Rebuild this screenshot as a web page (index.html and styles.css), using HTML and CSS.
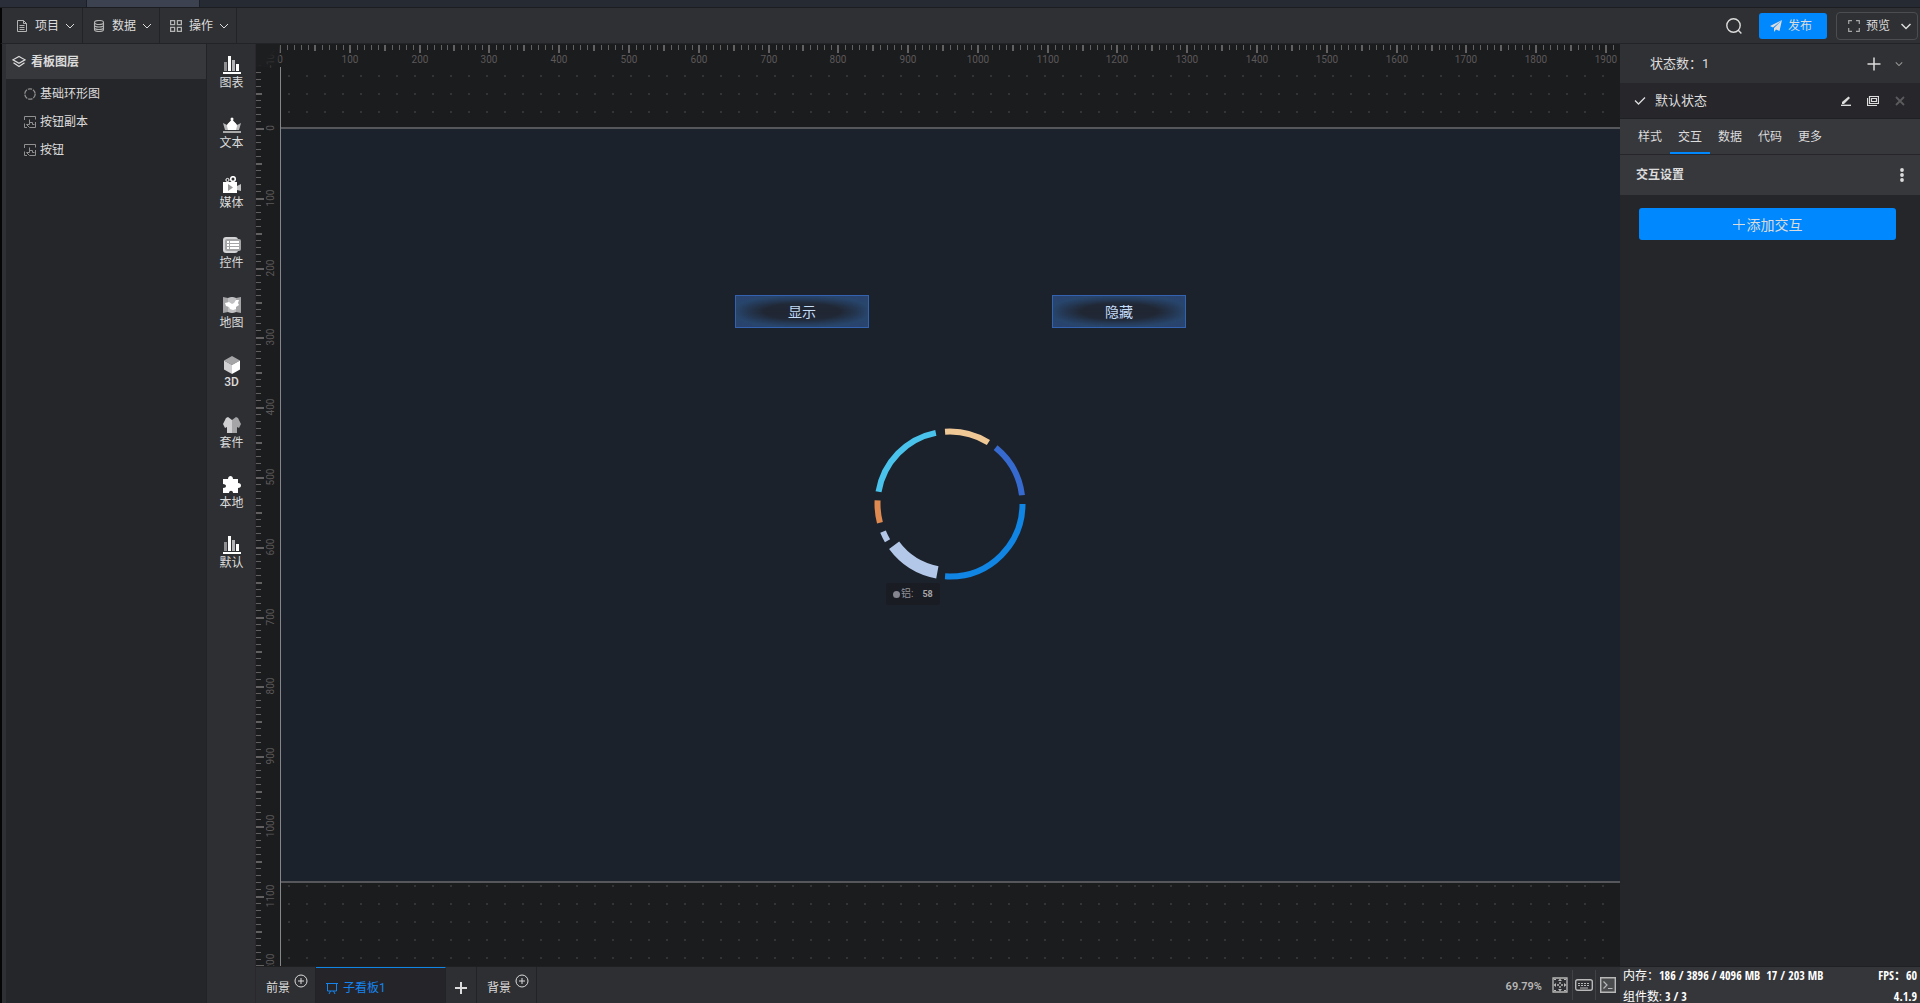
FILE: index.html
```html
<!DOCTYPE html>
<html lang="zh-CN">
<head>
<meta charset="utf-8">
<title>看板编辑器</title>
<link rel="stylesheet" href="styles.css">
</head>
<body>
<svg class="sprite" aria-hidden="true">
  <symbol id="chevron" viewBox="0 0 10 10"><path d="M1 3l4 4 4-4" fill="none" stroke="currentColor" stroke-width="1"/></symbol>
  <symbol id="bars" viewBox="0 0 18 18"><path d="M0 16h18v2H0z" fill="#fff"/><path d="M1 6h3v9H1z" fill="#8f8f91"/><path d="M5 0h3v15H5z" fill="#fff"/><path d="M9 4h3v11H9z" fill="#b4b4b6"/><path d="M13 8h3v7h-3z" fill="#fff"/></symbol>
  <symbol id="touch" viewBox="0 0 12 12"><path d="M.5 4V.500h11v3M.5 7.500v4h2.500M11.500 6v5.500H5.500L2.500 8.500h3V3.500M5.500 6.500h3v2h2" fill="none" stroke="currentColor"/></symbol>
  <symbol id="circle-plus" viewBox="0 0 14 14"><circle cx="7" cy="7" r="6" fill="none" stroke="currentColor"/><path d="M4 7h6M7 4v6" stroke="currentColor"/></symbol>
</svg>

<div class="window-tabs"><span class="window-tab"></span><span class="window-tab current"></span></div>

<header class="toolbar">
  <nav class="menus">
    <button class="menu"><svg class="icon12" viewBox="0 0 12 12"><path d="M1.500.500h6l3 3v8h-9zM7.500.500v3h3M3.500 5.500h5M3.500 7.500h5M3.500 9.500h5" fill="none" stroke="currentColor"/></svg><span>项目</span><svg class="chev"><use href="#chevron"/></svg></button>
    <button class="menu"><svg class="icon12" viewBox="0 0 12 12"><g fill="none" stroke="currentColor" stroke-width="1.100"><ellipse cx="6" cy="2.500" rx="4.500" ry="2"/><path d="M1.500 2.500v7c0 1.200 2 2 4.500 2s4.500-.8 4.500-2v-7M1.500 5c0 1.200 2 2 4.500 2s4.500-.8 4.500-2M1.500 7.500c0 1.200 2 2 4.500 2s4.500-.8 4.500-2"/></g></svg><span>数据</span><svg class="chev"><use href="#chevron"/></svg></button>
    <button class="menu"><svg class="icon12" viewBox="0 0 12 12"><path d="M.6.600h4v4h-4zM7.400.600h4v4h-4zM.6 7.400h4v4h-4zM7.400 7.400h4v4h-4z" fill="none" stroke="currentColor" stroke-width="1.300"/></svg><span>操作</span><svg class="chev"><use href="#chevron"/></svg></button>
  </nav>
  <div class="actions">
    <button class="search" aria-label="搜索"><svg viewBox="0 0 16 16"><circle cx="7.500" cy="7.500" r="6.700" fill="none" stroke="currentColor" stroke-width="1.400"/><path d="M12 12l3.400 3.400" stroke="currentColor" stroke-width="1.400"/></svg></button>
    <button class="publish"><svg class="icon12" viewBox="0 0 12 12"><path d="M12 0L0 6l3 1.500zM12 0L4 8v4l2-2.500L9.500 11z" fill="currentColor"/></svg><span>发布</span></button>
    <button class="preview"><svg class="icon12" viewBox="0 0 12 12"><path d="M.7 4V.700H4M8 .700h3.300V4M11.300 8v3.300H8M4 11.300H.700V8" fill="none" stroke="#a8a8a8" stroke-width="1.200"/></svg><span>预览</span><svg class="chev" viewBox="0 0 10 10"><path d="M.500 3L5 7.500 9.500 3" fill="none" stroke="currentColor" stroke-width="1.500"/></svg></button>
  </div>
</header>

<main class="workspace">
  <aside class="layers">
    <h2 class="layers-title"><svg viewBox="0 0 14 14"><path d="M7 1.500l6 3.300-6 3.400-6-3.400zM1.500 7.700L7 11.500l5.500-3.800" fill="none" stroke="currentColor" stroke-width="1.200"/></svg>看板图层</h2>
    <ul class="layer-list">
      <li><svg class="icon12" viewBox="0 0 12 12"><circle cx="6" cy="6" r="5.200" fill="none" stroke="currentColor" stroke-width="1.300" stroke-dasharray="4.400 1"/></svg>基础环形图</li>
      <li><svg class="icon12"><use href="#touch"/></svg>按钮副本</li>
      <li><svg class="icon12"><use href="#touch"/></svg>按钮</li>
    </ul>
  </aside>

  <nav class="tools">
    <button class="tool"><svg><use href="#bars"/></svg>图表</button>
    <button class="tool"><svg viewBox="0 0 18 18"><path d="M0 7l4 2 5-6 5 6 4-2-2 7H2z" fill="#b9b9bb"/><path d="M9 3c1 3 5 4 5 7l-1 4H5l-1-4c0-3 4-4 5-7z" fill="#fff"/><circle cx="9" cy="3" r="1.500" fill="#fff"/><path d="M0 15h18v2H0z" fill="#aaa"/></svg>文本</button>
    <button class="tool"><svg viewBox="0 0 18 18"><circle cx="4.500" cy="4" r="1.600" fill="none" stroke="#fff"/><circle cx="10" cy="3" r="2.300" fill="none" stroke="#fff" stroke-width="1.600"/><path d="M0 6h14v11H0z" fill="#fff"/><path d="M5 8l5 3.500L5 15z" fill="#999"/><path d="M14 10l4-2v7l-4-1z" fill="#c4c4c6"/></svg>媒体</button>
    <button class="tool"><svg viewBox="0 0 18 18"><rect x="0" y="1" width="15" height="16" rx="3" fill="#d4d4d6"/><rect x="2" y="3" width="16" height="12" rx="2" fill="#a5a5a8"/><path d="M4 5h2v2H4zM7 5h9v2H7zM4 8h2v2H4zM7 8h9v2H7zM4 11h2v2H4zM7 11h9v2H7z" fill="#fff"/></svg>控件</button>
    <button class="tool"><svg viewBox="0 0 18 18"><path d="M0 1l5 1 4-1 4 1 5-1v16l-5-1-4 1-4-1-5 1z" fill="#a5a5a8"/><path d="M5 2l4-1 4 1v14l-4 1-4-1z" fill="#c0c0c2"/><path d="M2 7l4-1 3 2 2-1 2-3h3l-1 3 1 2-3 2v2l-3 1-3-1-1-2-3-1z" fill="#fff"/></svg>地图</button>
    <button class="tool"><svg viewBox="0 0 18 18"><path d="M9 0l8 4.500L9 9 1 4.500z" fill="#a5a5a8"/><path d="M1 4.500L9 9v9l-8-4.500z" fill="#d0d0d2"/><path d="M17 4.500L9 9v9l8-4.500z" fill="#fff"/></svg><span>3D</span></button>
    <button class="tool"><svg viewBox="0 0 18 18"><path d="M5 1l4 3v13H4v-6l-2 1-2-4 3-6z" fill="#d0d0d2"/><path d="M13 1L9 4v13h5v-6l2 1 2-4-3-6z" fill="#a5a5a8"/></svg>套件</button>
    <button class="tool"><svg viewBox="0 0 18 18"><path d="M0 3h5c0-4 5-4 5 0h5v4c4 0 4 5 0 5v5h-5c0-3-4-3-4 0H0v-5c4 0 4-4 0-4z" fill="#fff"/></svg>本地</button>
    <button class="tool"><svg><use href="#bars"/></svg>默认</button>
  </nav>

  <section class="stage">
    <div class="board">
      <svg class="ruler-top" id="ruler-top" aria-hidden="true"></svg>
      <svg class="ruler-left" id="ruler-left" aria-hidden="true"></svg>
      <div class="ruler-corner"></div>
      <div class="grid">
        <div class="canvas">
          <button class="node glow show">显示</button>
          <button class="node glow hide">隐藏</button>
          <svg class="node ring" viewBox="-80 -80 160 160" role="img" aria-label="基础环形图">
            <g fill="none" stroke-width="6" transform="rotate(-90)">
              <circle r="72.500" pathLength="360" stroke="#f0c896" stroke-dasharray="36 324" stroke-dashoffset="4"/>
              <circle r="72.500" pathLength="360" stroke="#366ace" stroke-dasharray="44 316" stroke-dashoffset="-39"/>
              <circle r="72.500" pathLength="360" stroke="#1085e3" stroke-dasharray="94 266" stroke-dashoffset="-90"/>
              <circle r="69.500" pathLength="360" stroke="#b3c8e9" stroke-width="12.500" stroke-dasharray="43 317" stroke-dashoffset="-190.500"/>
              <circle r="72.500" pathLength="360" stroke="#b3c8e9" stroke-dasharray="8 352" stroke-dashoffset="-239.500"/>
              <circle r="72.500" pathLength="360" stroke="#de8a50" stroke-dasharray="18 342" stroke-dashoffset="-255"/>
              <circle r="72.500" pathLength="360" stroke="#4ac3ec" stroke-dasharray="69 291" stroke-dashoffset="-279.700"/>
            </g>
          </svg>
          <div class="node tip"><i></i><span>铝:</span><b>58</b></div>
        </div>
      </div>
    </div>
    <footer class="pages">
      <button class="page">前景<svg class="plus-badge"><use href="#circle-plus"/></svg></button>
      <button class="page current"><svg class="icon12" viewBox="0 0 12 12"><path d="M0 1.500h12M1.500 2v7h9V2M4.500 9l-1.500 3M7.500 9L9 12" fill="none" stroke="currentColor"/></svg>子看板1</button>
      <button class="page add" aria-label="添加"><svg class="icon12" viewBox="0 0 12 12"><path d="M0 6h12M6 0v12" stroke="currentColor" stroke-width="2"/></svg></button>
      <button class="page">背景<svg class="plus-badge"><use href="#circle-plus"/></svg></button>
      <div class="view">
        <span class="zoom">69.79%</span>
        <button aria-label="适应画布"><svg class="icon16" viewBox="0 0 16 16"><path d="M1 1h14v14H1z" fill="none" stroke="currentColor" stroke-width="1.300"/><path d="M8 1.500l2 2.500H6zM8 14.500L6 12h4zM1.500 8L4 6v4zM14.500 8L12 10V6zM7.300 5h1.400v2H7.300zM7.300 9h1.400v2H7.300zM5 7.300h2v1.400H5zM9 7.300h2v1.400H9zM2 2h2v1H2zM12 2h2v1h-2zM2 13h2v1H2zM12 13h2v1h-2z" fill="currentColor"/></svg></button>
        <button aria-label="快捷键"><svg class="icon18" viewBox="0 0 18 16"><rect x=".700" y="2.700" width="16.600" height="10.600" rx="2" fill="none" stroke="currentColor" stroke-width="1.400"/><path d="M3 6.500h12M3 8.500h12" stroke="currentColor" stroke-dasharray="2 1"/><path d="M5 11h8" stroke="currentColor"/></svg></button>
        <button aria-label="控制台"><svg class="icon16" viewBox="0 0 16 16"><path d="M.700.700h14.600v14.600H.700z" fill="#4a4b4d" stroke="currentColor" stroke-width="1.400"/><path d="M3.500 4.500L7 8l-3.500 3.500M8 11.500h4.500" fill="none" stroke="currentColor" stroke-width="1.200"/></svg></button>
      </div>
    </footer>
  </section>

  <aside class="props">
    <div class="state-count"><span>状态数：1</span>
      <button aria-label="添加状态"><svg class="icon14" viewBox="0 0 14 14"><path d="M.500 7h13M7 .500v13" stroke="currentColor" stroke-width="1.500"/></svg></button>
      <button class="dim" aria-label="展开"><svg class="icon8" viewBox="0 0 10 10"><path d="M1 3l4 4 4-4" fill="none" stroke="currentColor" stroke-width="1.300"/></svg></button>
    </div>
    <div class="state-row">
      <svg class="check" viewBox="0 0 12 12"><path d="M1 5.500l3.500 3.500L11 2.500" fill="none" stroke="currentColor" stroke-width="1.300"/></svg><span>默认状态</span>
      <button aria-label="重命名"><svg class="icon10" viewBox="0 0 10 10"><path d="M0 9.300h10" stroke="currentColor" stroke-width="1.400"/><path d="M1 8V6L7.500 .5l1.500 1.500-6 6z" fill="currentColor"/></svg></button>
      <button aria-label="复制"><svg class="icon12" viewBox="0 0 12 12"><path d="M2.500 1.500h9v7h-9zM.5 3v7.500h9.500M4.500 3.500h5v3h-5z" fill="none" stroke="currentColor" stroke-width="1.200"/></svg></button>
      <button class="off" aria-label="删除"><svg class="icon10" viewBox="0 0 10 10"><path d="M1 1l8 8M9 1L1 9" stroke="currentColor" stroke-width="1.800"/></svg></button>
    </div>
    <nav class="prop-tabs">
      <button>样式</button><button class="current">交互</button><button>数据</button><button>代码</button><button>更多</button>
    </nav>
    <div class="section-head"><h3>交互设置</h3><button aria-label="更多操作"><svg viewBox="0 0 4 14"><circle cx="2" cy="2" r="1.900"/><circle cx="2" cy="7" r="1.900"/><circle cx="2" cy="12" r="1.900"/></svg></button></div>
    <div class="section-body"><button class="add-action"><svg class="icon12" viewBox="0 0 12 12"><path d="M0 5.500h12M6 0v11" stroke="currentColor"/></svg>添加交互</button></div>
    <footer class="stats">
      <div><span>内存：<b>186 / 3896 / 4096 MB&nbsp; 17 / 203 MB</b></span><b>FPS：60</b></div>
      <div><span>组件数: <b>3 / 3</b></span><b>4.1.9</b></div>
    </footer>
  </aside>
</main>
<script src="rulers.js"></script>
</body>
</html>
```

FILE: styles.css
```css
* { box-sizing: border-box; }
body {
  margin: 0;
  height: 100vh;
  display: flex;
  flex-direction: column;
  overflow: hidden;
  background: #252629;
  color: #dcdcdc;
  font: 12px/16px Roboto, "Noto Sans CJK SC", sans-serif;
}
button {
  margin: 0;
  padding: 0;
  border: 0;
  background: none;
  color: inherit;
  font: inherit;
  display: flex;
  align-items: center;
  cursor: pointer;
}
h2, h3, ul { margin: 0; padding: 0; font-size: 12px; list-style: none; }
svg { flex: none; display: block; }
.sprite { position: absolute; width: 0; height: 0; }
.icon8 { width: 8px; height: 8px; }
.icon10 { width: 10px; height: 10px; }
.icon12 { width: 12px; height: 12px; }
.icon14 { width: 14px; height: 14px; }
.icon16 { width: 16px; height: 16px; }
.icon18 { width: 18px; height: 16px; }
.chev { width: 10px; height: 10px; }

.window-tabs { display: flex; height: 8px; background: #262a33; border-bottom: 1px solid #1c1d20; }
.window-tab { width: 87px; border-right: 1px solid #1c1f26; background: #2a2e38; }
.window-tab.current { width: 113px; background: #3c4250; }

.toolbar {
  display: flex;
  justify-content: space-between;
  height: 36px;
  padding-left: 4px;
  border-left: 2px solid #050505;
  border-bottom: 1px solid #222326;
  background: #2f3033;
}
.menus { display: flex; }
.menu { width: 77px; padding-left: 10px; gap: 7px; border-right: 1px solid #222326; }
.menu .icon12 { color: #b4b4b4; }
.menu .chev { margin-left: -1px; }
.actions { display: flex; align-items: center; padding-right: 2px; }
.search { margin-right: 17px; }
.search svg { width: 16px; height: 16px; }
.publish { height: 26px; width: 68px; padding-left: 11px; gap: 6px; border-radius: 3px; background: #0088ff; margin-right: 9px; }
.preview { height: 28px; width: 82px; padding-left: 11px; gap: 6px; border: 1px solid #4c4d50; border-radius: 4px; }
.preview .chev { margin-left: 5px; }

.workspace { flex: 1; display: flex; min-height: 0; border-left: 2px solid #050505; padding-left: 4px; background: #2f3033; }
.layers { width: 201px; background: #252629; border-right: 1px solid #222326; }
.layers-title { display: flex; align-items: center; gap: 5px; height: 35px; padding-left: 6px; background: #37383c; }
.layers-title svg { width: 14px; height: 14px; }
.layer-list { padding-top: 1px; }
.layer-list li { display: flex; align-items: center; gap: 4px; height: 28px; padding-left: 18px; }
.layer-list .icon12 { color: #909090; }

.tools { width: 49px; padding-left: 1px; background: #2e2f32; border-right: 1px solid #29292c; }
.tool { flex-direction: column; width: 100%; height: 60px; padding-top: 12px; gap: 1px; }
.tool svg { width: 18px; height: 18px; }
.tool span { font-weight: 500; line-height: 14px; }

.stage { flex: 1; min-width: 0; display: flex; flex-direction: column; }
.board {
  flex: 1;
  min-height: 0;
  display: grid;
  grid-template-columns: 24px 1fr;
  grid-template-rows: 23px 1fr;
  background: #1b1c1e;
  overflow: hidden;
}
.ruler-top { grid-area: 1 / 1 / 2 / 3; width: 100%; height: 23px; }
.ruler-left { grid-area: 1 / 1 / 3 / 2; width: 24px; height: 100%; }
.ruler-corner { grid-area: 1 / 1; background: linear-gradient(135deg, #1d1e20 50%, transparent); }
.ruler-top text, .ruler-left text { font: 10px Roboto, sans-serif; fill: #5b5859; text-anchor: middle; }
.ruler-top rect, .ruler-left rect { fill: #636061; }
.grid {
  grid-area: 2 / 2;
  border-left: 1px solid #85858a;
  padding-top: 60px;
  background: conic-gradient(from 270deg at 2px 2px, #333437 90deg, transparent 0) 7px 8px / 18px 18px;
}
.canvas { position: relative; height: 756px; border: solid #55575a; border-width: 2px 0; background: #1c222c; }
.node { position: absolute; }
.glow {
  width: 134px;
  height: 33px;
  top: 166px;
  justify-content: center;
  border: 1px solid #3363b0;
  background:
    linear-gradient(90deg, transparent 25%, #8fb8cc 50%, transparent 75%) top / 100% 1px no-repeat border-box,
    linear-gradient(90deg, transparent 25%, #8fb8cc 50%, transparent 75%) bottom / 100% 1px no-repeat border-box,
    radial-gradient(ellipse farthest-corner, transparent 40%, #28456c 75%, #2d3b75 100%),
    #212733;
  box-shadow: inset 0 0 12px 1px #29486e;
  color: #c5dcf8;
  font-size: 14px;
}
.show { left: 454px; }
.hide { left: 771px; }
.ring { left: 589px; top: 295px; width: 160px; height: 160px; }
.tip {
  left: 605px;
  top: 454px;
  display: flex;
  align-items: center;
  gap: 1px;
  width: 54px;
  height: 22px;
  padding-left: 7px;
  border-radius: 3px;
  background: #1a1c23;
  color: #929299;
  font-size: 10px;
}
.tip i { width: 7px; height: 7px; border-radius: 50%; background: #85858f; }
.tip b { margin-left: 8px; color: #a5a5a9; font-size: 9px; }

.pages { display: flex; height: 37px; border-top: 1px solid #1f2022; background: #2e2f32; }
.page { width: 60px; padding: 5px 0 0 10px; gap: 4px; border-right: 1px solid #222326; }
.plus-badge { width: 14px; height: 14px; margin-bottom: 14px; }
.page.current { width: 130px; gap: 5px; border-top: 1px solid #1085e3; background: #252529; color: #1684ee; }
.page.add { width: 31px; padding-left: 9px; }
.view { display: flex; align-items: center; margin-left: auto; }
.zoom { margin-right: 5px; padding-top: 4px; font-size: 11px; font-weight: 600; color: #b8b8b8; }
.view button { height: 30px; padding: 0 4px; border-left: 1px solid #414245; color: #b8b8b8; }
.view button:nth-of-type(1) { border-left-color: transparent; }
.view button:nth-of-type(2) { padding: 0 2px; }

.props { width: 300px; display: flex; flex-direction: column; background: #252629; }
.state-count { display: flex; align-items: center; height: 39px; padding: 0 17px 0 30px; gap: 14px; background: #303134; font-size: 13px; }
.state-count span, .state-row span { flex: 1; }
.dim { color: #999; }
.state-row { display: flex; align-items: center; height: 36px; padding: 0 15px 0 14px; gap: 16px; border-bottom: 1px solid #1f2023; background: #26262b; font-size: 13px; }
.state-row span { margin-left: -7px; }
.check { width: 12px; height: 12px; }
.off { color: #5b5b5e; }
.prop-tabs { display: flex; height: 36px; padding-left: 10px; border-bottom: 1px solid #26262a; background: #37383c; }
.prop-tabs button { width: 40px; padding-top: 2px; justify-content: center; border-bottom: 2px solid transparent; }
.prop-tabs .current { border-color: #0088ff; }
.section-head { display: flex; align-items: center; justify-content: space-between; height: 40px; padding: 0 16px; background: #37383c; }
.section-head svg { width: 4px; height: 14px; fill: currentColor; }
.section-body { flex: 1; padding: 13px 24px 0 19px; }
.add-action { width: 100%; height: 32px; padding-top: 2px; justify-content: center; gap: 2px; border-radius: 3px; background: #0088ff; font-size: 14px; }
.stats { display: grid; gap: 9px; height: 37px; padding: 3px 3px 0; border-top: 1px solid #1f2022; background: #35363a; color: #fff; line-height: 12px; }
.stats div { display: flex; justify-content: space-between; }
.stats b { font: bold 12px/12px "Open Sans Condensed", Roboto, "Noto Sans CJK SC", sans-serif; }
```

FILE: rulers.js
```js
// Draws the ruler ticks and labels at the current canvas zoom.
const ZOOM = 0.6979;
const NS = 'http://www.w3.org/2000/svg';

function add(parent, name, attrs, label) {
  const el = document.createElementNS(NS, name);
  for (const key in attrs) el.setAttribute(key, attrs[key]);
  if (label !== undefined) el.textContent = label;
  parent.appendChild(el);
}

function drawRuler(svg, origin, first, length, vertical) {
  for (let unit = first; origin + unit * ZOOM < length + 20; unit += 10) {
    const pos = Math.round(origin + unit * ZOOM);
    const major = unit % 100 === 0;
    const half = unit % 50 === 0;
    const size = major ? 8 : half ? 6 : 5;
    const thick = half ? 2 : 1;
    add(svg, 'rect', vertical
      ? { x: 0, y: pos, width: size, height: thick }
      : { x: pos - (half ? 1 : 0), y: 1, width: thick, height: size });
    if (major) {
      add(svg, 'text', vertical
        ? { transform: `translate(18 ${pos}) rotate(-90)` }
        : { x: pos, y: 19 }, unit);
    }
  }
}

function drawRulers() {
  const top = document.getElementById('ruler-top');
  const left = document.getElementById('ruler-left');
  top.replaceChildren();
  left.replaceChildren();
  drawRuler(top, 24, 0, top.clientWidth, false);
  drawRuler(left, 84, -100, left.clientHeight, true);
}

drawRulers();
window.addEventListener('resize', drawRulers);
```
